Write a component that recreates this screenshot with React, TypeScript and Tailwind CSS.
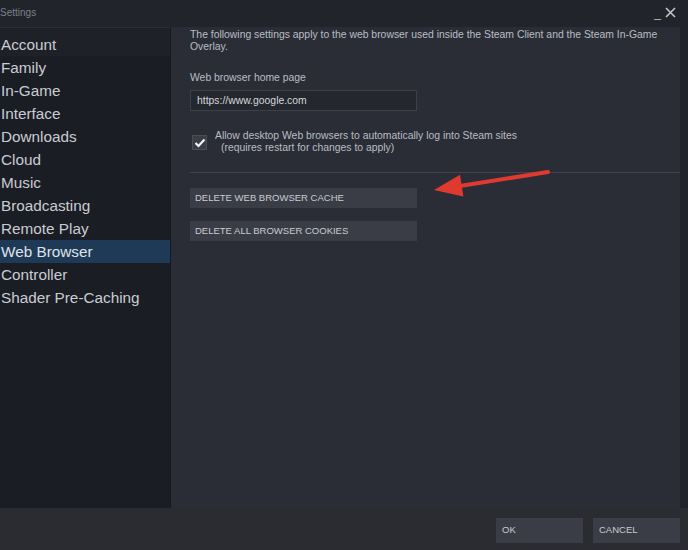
import React from "react";

const items = [
  "Account",
  "Family",
  "In-Game",
  "Interface",
  "Downloads",
  "Cloud",
  "Music",
  "Broadcasting",
  "Remote Play",
  "Web Browser",
  "Controller",
  "Shader Pre-Caching",
];

export default function App() {
  return (
    <div
      className="w-[688px] h-[550px] bg-[#22242b] flex flex-col overflow-hidden"
      style={{ fontFamily: '"Liberation Sans", Arial, sans-serif' }}
    >
      {/* title bar */}
      <div className="h-[27px] flex items-start justify-between shrink-0">
        <div className="text-[10px] text-[#7d8088] mt-[5px] ml-0">Settings</div>
        <div className="flex items-center gap-[4px] mr-[12px] mt-[3px] text-[#b9bcc2]">
          <span className="text-[12px] leading-none mt-[4px]">_</span>
          <svg width="11" height="11" viewBox="0 0 11 11" className="mt-[2px]">
            <path d="M1 1L10 10M10 1L1 10" stroke="#c2c5ca" strokeWidth="1.6" />
          </svg>
        </div>
      </div>

      {/* main */}
      <div className="flex h-[481px] shrink-0">
        <div className="w-[170px] bg-[#1b1d25] border-t border-[#2b2e36]">
          <div className="h-[5px] bg-[#1f2129]" />
          {items.map((it) => (
            <div
              key={it}
              className={
                "h-[23px] flex items-center text-[15.3px] leading-none pl-[1px] text-[#c9ccd2] " +
                (it === "Web Browser" ? "bg-[#1f3a57] text-[#dfe3e8]" : it === "Account" ? "bg-[#1f2129]" : "")
              }
            >
              {it}
            </div>
          ))}
        </div>
        <div className="w-[1px] bg-[#17181d]" />
        <div className="w-[509px] bg-[#2a2d36] pl-[19px] pt-[2px] text-[#b9bdc4]">
          <div className="text-[10.4px] leading-[12px] w-[485px]">
            The following settings apply to the web browser used inside the Steam Client and the Steam In-Game Overlay.
          </div>
          <div className="text-[10.4px] mt-[19px] leading-[12px]">Web browser home page</div>
          <div className="mt-[6px] w-[227px] h-[21px] bg-[#25272e] border border-[#3d4049] flex items-center pl-[6px] text-[10.4px] text-[#d4d7dc]">
            https://www.google.com
          </div>
          <div className="flex mt-[19px]">
            <div className="w-[15px] h-[15px] mt-[5px] ml-[2px] bg-[#3a3d45] border border-[#4a4d55] flex items-center justify-center">
              <svg width="12" height="10" viewBox="0 0 12 10">
                <path d="M1.5 5L4.5 8L10.5 1.5" stroke="#f2f3f5" strokeWidth="2.2" fill="none" />
              </svg>
            </div>
            <div className="ml-[8px] text-[10.4px] leading-[12px]">
              <div>Allow desktop Web browsers to automatically log into Steam sites</div>
              <div className="pl-[6px]">(requires restart for changes to apply)</div>
            </div>
          </div>
          <div className="mt-[18px] h-[1px] bg-[#41444c]" />
          <div className="relative pt-[15px]">
            <div className="w-[227px] h-[20px] bg-[#3a3d46] flex items-center pl-[5px] text-[9.5px] text-[#c9ccd2]">
              DELETE WEB BROWSER CACHE
            </div>
            <div className="mt-[13px] w-[227px] h-[20px] bg-[#3a3d46] flex items-center pl-[5px] text-[9.5px] text-[#c9ccd2]">
              DELETE ALL BROWSER COOKIES
            </div>
            <svg
              className="absolute left-[240px] -top-[9px]"
              width="125"
              height="40"
              viewBox="0 0 125 40"
            >
              <path d="M118 8L30 22" stroke="#e03a30" strokeWidth="4" strokeLinecap="round" />
              <path d="M4 26L30 10.7L33.4 32.5Z" fill="#e03a30" />
            </svg>
          </div>
        </div>
        <div className="w-[8px] bg-[#22242b]" />
      </div>

      {/* bottom */}
      <div className="flex-1 bg-[#2a2c31] flex justify-end items-start pt-[10px] pr-[8px] gap-[10px]">
        <div className="w-[87px] h-[25px] bg-[#3a3d45] flex items-center pl-[6px] text-[9.5px] text-[#c9ccd2]">OK</div>
        <div className="w-[87px] h-[25px] bg-[#3a3d45] flex items-center pl-[6px] text-[9.5px] text-[#c9ccd2]">CANCEL</div>
      </div>
    </div>
  );
}
